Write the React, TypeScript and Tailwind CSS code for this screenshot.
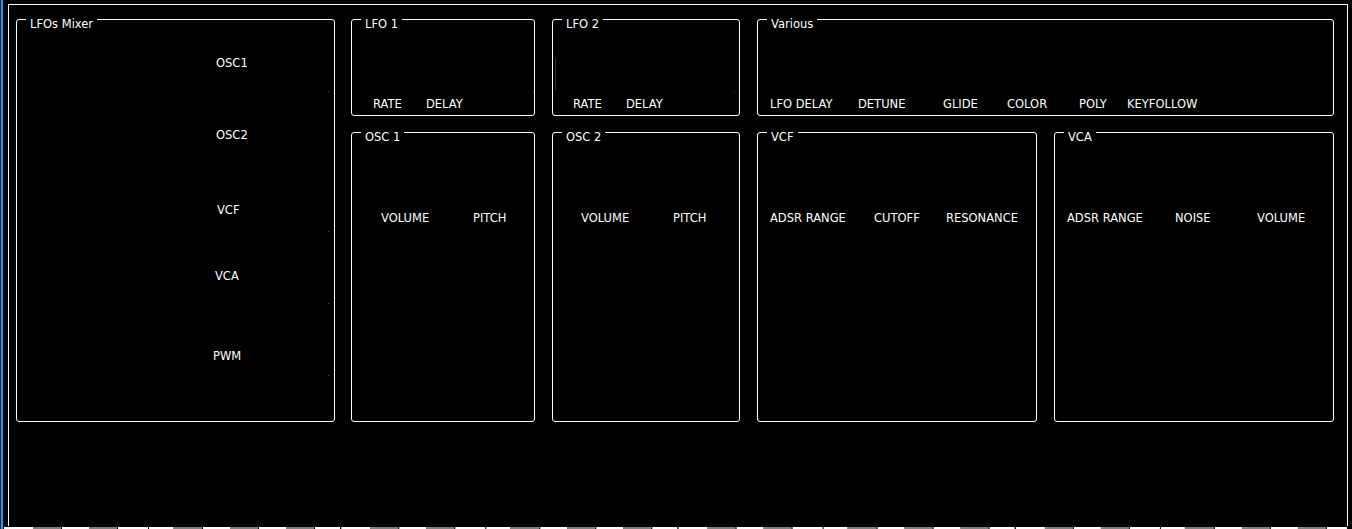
import React from "react";

const font = "font-['DejaVu_Sans',sans-serif] text-[11.5px] leading-[13px] text-white whitespace-nowrap";

function Group({
  title,
  className,
  children,
}: {
  title: string;
  className: string;
  children?: React.ReactNode;
}) {
  return (
    <div className={`relative border border-white rounded-[3px] ${className}`}>
      <span className={`absolute left-[9px] top-[-2px] px-[4px] bg-black ${font}`}>{title}</span>
      {children}
    </div>
  );
}

function Labels({ items, className }: { items: [string, string][]; className: string }) {
  return (
    <div className={`flex ${className}`}>
      {items.map(([t, w]) => (
        <div key={t} className={`${w} ${font}`}>
          {t}
        </div>
      ))}
    </div>
  );
}

const octave: [number, number, string][] = [
  [0, 29, "#ffffff"],
  [29, 57, "#808080"],
  [58, 85, "#ffffff"],
  [85, 113, "#808080"],
  [114, 144, "#ffffff"],
  [145, 169, "#ffffff"],
  [169, 198, "#808080"],
  [199, 226, "#ffffff"],
  [226, 254, "#808080"],
  [255, 282, "#ffffff"],
  [282, 310, "#808080"],
  [311, 336, "#ffffff"],
];

function KeyStrip() {
  const rects: React.ReactNode[] = [];
  for (let o = 0; o < 4; o++) {
    octave.forEach(([a, b, c], i) => {
      rects.push(<rect key={`${o}-${i}`} x={o * 337.3 + a} y={0} width={b - a} height={2} fill={c} />);
    });
  }
  return (
    <svg width={1343} height={2} className="block ml-[4px] mt-[1px]">
      {rects}
    </svg>
  );
}

export default function App() {
  return (
    <div className="w-[1352px] h-[529px] bg-black overflow-hidden flex">
      <div className="w-[1px] h-full bg-[#2a2a2a]" />
      <div className="w-[2px] h-full bg-[#3c8fe3]" />
      <div className="flex flex-col">
        <div className="ml-[5px] mt-[4px] w-[1340px] h-[522px] border-l border-t border-r border-white pl-[7px] pt-[14px] flex gap-[16px]">
          <Group title="LFOs Mixer" className="w-[319px] h-[403px]">
            <div className="flex flex-col pt-[37px]">
              <div className={`ml-[199px] ${font}`}>OSC1</div>
              <div className={`ml-[199px] mt-[59px] ${font}`}>OSC2</div>
              <div className={`ml-[200px] mt-[62px] ${font}`}>VCF</div>
              <div className={`ml-[198px] mt-[53px] ${font}`}>VCA</div>
              <div className={`ml-[196px] mt-[67px] ${font}`}>PWM</div>
            </div>
            <span className="absolute left-[311px] top-[71px] w-[1px] h-[1px] bg-[#4a4a4a]" />
            <span className="absolute left-[311px] top-[211px] w-[1px] h-[1px] bg-[#4a4a4a]" />
            <span className="absolute left-[311px] top-[283px] w-[1px] h-[1px] bg-[#4a4a4a]" />
            <span className="absolute left-[311px] top-[355px] w-[1px] h-[1px] bg-[#4a4a4a]" />
          </Group>
          <div className="flex flex-col gap-[16px]">
            <div className="flex gap-[17px]">
              <Group title="LFO 1" className="w-[184px] h-[97px]">
                <Labels
                  className="pt-[78px] pl-[21px]"
                  items={[
                    ["RATE", "w-[53px]"],
                    ["DELAY", "w-[50px]"],
                  ]}
                />
                <span className="absolute left-[181px] top-[71px] w-[1px] h-[1px] bg-[#4a4a4a]" />
              </Group>
              <Group title="LFO 2" className="w-[188px] h-[97px]">
                <Labels
                  className="pt-[78px] pl-[20px]"
                  items={[
                    ["RATE", "w-[53px]"],
                    ["DELAY", "w-[50px]"],
                  ]}
                />
                <span className="absolute left-[2px] top-[38px] w-[1px] h-[32px] bg-[#2e2e2e]" />
                <span className="absolute left-[181px] top-[71px] w-[1px] h-[1px] bg-[#4a4a4a]" />
              </Group>
              <Group title="Various" className="w-[577px] h-[97px]">
                <Labels
                  className="pt-[78px] pl-[12px]"
                  items={[
                    ["LFO DELAY", "w-[88px]"],
                    ["DETUNE", "w-[85px]"],
                    ["GLIDE", "w-[64px]"],
                    ["COLOR", "w-[72px]"],
                    ["POLY", "w-[48px]"],
                    ["KEYFOLLOW", "w-[80px]"],
                  ]}
                />
              </Group>
            </div>
            <div className="flex gap-[17px]">
              <Group title="OSC 1" className="w-[184px] h-[290px]">
                <Labels
                  className="pt-[79px] pl-[29px]"
                  items={[
                    ["VOLUME", "w-[92px]"],
                    ["PITCH", "w-[50px]"],
                  ]}
                />
              </Group>
              <Group title="OSC 2" className="w-[188px] h-[290px]">
                <Labels
                  className="pt-[79px] pl-[28px]"
                  items={[
                    ["VOLUME", "w-[92px]"],
                    ["PITCH", "w-[50px]"],
                  ]}
                />
              </Group>
              <Group title="VCF" className="w-[280px] h-[290px]">
                <Labels
                  className="pt-[79px] pl-[12px]"
                  items={[
                    ["ADSR RANGE", "w-[104px]"],
                    ["CUTOFF", "w-[72px]"],
                    ["RESONANCE", "w-[80px]"],
                  ]}
                />
              </Group>
              <Group title="VCA" className="w-[280px] h-[290px]">
                <Labels
                  className="pt-[79px] pl-[12px]"
                  items={[
                    ["ADSR RANGE", "w-[108px]"],
                    ["NOISE", "w-[82px]"],
                    ["VOLUME", "w-[60px]"],
                  ]}
                />
              </Group>
            </div>
          </div>
        </div>
        <div className="-ml-[3px]">
          <KeyStrip />
        </div>
      </div>
    </div>
  );
}
